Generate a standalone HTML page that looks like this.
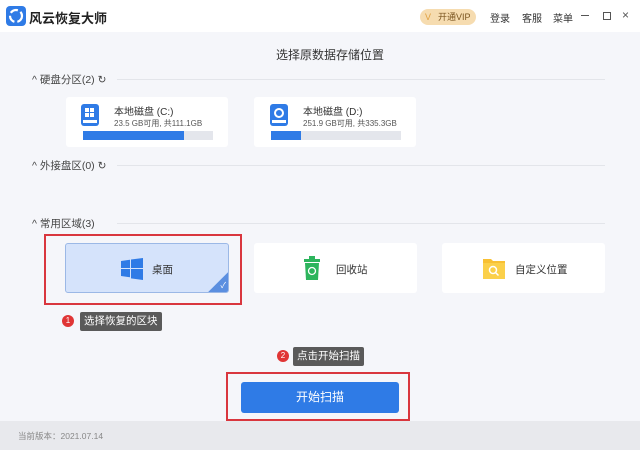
<!DOCTYPE html><html><head><meta charset="utf-8"><style>
*{margin:0;padding:0;box-sizing:border-box}
body{width:640px;height:450px;background:#f5f6fa;font-family:"Liberation Sans","Noto Sans CJK SC",sans-serif;position:relative;overflow:hidden;color:#333}
.a{position:absolute}
.card{position:absolute;background:#fff;border-radius:3px}
.sec{position:absolute;left:32px;font-size:10.5px;color:#444}
.line{position:absolute;height:1px;background:#e3e5ea;left:117px;width:488px}
.tip{position:absolute;background:#5a5a5a;color:#fff;font-size:10.5px;line-height:19px;padding:0 4px;border-radius:2px}
.dot{position:absolute;width:12px;height:12px;border-radius:50%;background:#e03535;color:#fff;font-size:8px;text-align:center;line-height:12px}
</style></head><body>
<div class="a" style="left:0;top:0;width:640px;height:32px;background:#fff"></div>
<svg class="a" style="left:6px;top:6px" width="20" height="20"><rect width="20" height="20" rx="4" fill="#2f7be6"/><circle cx="10" cy="10" r="6" fill="none" stroke="#fff" stroke-width="2.2" stroke-dasharray="8 3"/></svg>
<div class="a" style="left:29px;top:8px;font-size:13px;font-weight:bold;color:#222">风云恢复大师</div>
<div class="a" style="left:420px;top:9px;width:56px;height:16px;border-radius:8px;background:#f6dcb0;font-size:9px;color:#7a5520;line-height:16px;padding-left:18px">开通VIP</div>
<div class="a" style="left:425px;top:12px;font-size:9px;color:#e0a040">V</div>
<div class="a" style="left:490px;top:10px;font-size:10px;color:#333">登录</div>
<div class="a" style="left:522px;top:10px;font-size:10px;color:#333">客服</div>
<div class="a" style="left:553px;top:10px;font-size:10px;color:#333">菜单</div>
<div class="a" style="left:581px;top:15px;width:8px;height:1px;background:#555"></div>
<div class="a" style="left:603px;top:12px;width:8px;height:8px;border:1px solid #555"></div>
<div class="a" style="left:622px;top:8px;font-size:12px;color:#555">×</div>
<div class="a" style="left:0;top:46px;width:640px;text-align:center;font-size:12px;color:#333;padding-left:20px">选择原数据存储位置</div>

<div class="sec" style="top:72px">^ 硬盘分区(2) ↻</div><div class="line" style="top:79px"></div>
<div class="card" style="left:66px;top:97px;width:162px;height:50px"></div>
<svg class="a" style="left:81px;top:104px" width="18" height="22"><rect width="18" height="22" rx="3" fill="#2f7be6"/><rect x="4" y="4" width="4" height="4" fill="#fff"/><rect x="9" y="4" width="4" height="4" fill="#fff"/><rect x="4" y="9" width="4" height="4" fill="#fff"/><rect x="9" y="9" width="4" height="4" fill="#fff"/><rect x="2" y="16" width="14" height="3" fill="#fff"/></svg>
<div class="a" style="left:114px;top:103px;font-size:10px">本地磁盘 (C:)</div>
<div class="a" style="left:114px;top:118px;font-size:8px;color:#555">23.5 GB可用, 共111.1GB</div>
<div class="a" style="left:83px;top:131px;width:130px;height:9px;background:#e4e6ec"><div style="width:101px;height:9px;background:#2f7be6"></div></div>
<div class="card" style="left:254px;top:97px;width:162px;height:50px"></div>
<svg class="a" style="left:270px;top:104px" width="18" height="22"><rect width="18" height="22" rx="3" fill="#2f7be6"/><circle cx="9" cy="9" r="4" fill="none" stroke="#fff" stroke-width="2"/><rect x="2" y="16" width="14" height="3" fill="#fff"/></svg>
<div class="a" style="left:303px;top:103px;font-size:10px">本地磁盘 (D:)</div>
<div class="a" style="left:303px;top:118px;font-size:8px;color:#555">251.9 GB可用, 共335.3GB</div>
<div class="a" style="left:271px;top:131px;width:130px;height:9px;background:#e4e6ec"><div style="width:30px;height:9px;background:#2f7be6"></div></div>

<div class="sec" style="top:158px">^ 外接盘区(0) ↻</div><div class="line" style="top:165px"></div>
<div class="sec" style="top:216px">^ 常用区域(3)</div><div class="line" style="top:223px"></div>

<div class="a" style="left:44px;top:234px;width:198px;height:71px;border:2px solid #d9363e"></div>
<div class="card" style="left:65px;top:243px;width:164px;height:50px;background:#d5e3fb;border:1px solid #9bb8e6;overflow:hidden"><div class="a" style="right:-14px;bottom:-14px;width:28px;height:28px;background:#5b8fe0;transform:rotate(45deg)"></div><div class="a" style="right:2px;bottom:1px;color:#fff;font-size:8px">✓</div></div>
<svg class="a" style="left:121px;top:258px" width="22" height="22"><path d="M0 3l9-1.3v8.3H0zM10 1.5L22 0v10H10zM0 11h9v8.3L0 18zM10 11h12v11l-12-1.6z" fill="#2f7be6"/></svg>
<div class="a" style="left:152px;top:262px;font-size:10.5px">桌面</div>
<div class="card" style="left:254px;top:243px;width:163px;height:50px"></div>
<svg class="a" style="left:304px;top:256px" width="16" height="24"><rect x="5" y="0" width="6" height="3" fill="#2db55d"/><rect x="0" y="3" width="16" height="3" fill="#2db55d"/><path d="M1 7h14l-1 17H2z" fill="#2db55d"/><circle cx="8" cy="15" r="3.5" fill="none" stroke="#fff" stroke-width="1.3"/></svg>
<div class="a" style="left:336px;top:262px;font-size:10.5px">回收站</div>
<div class="card" style="left:442px;top:243px;width:163px;height:50px"></div>
<svg class="a" style="left:483px;top:257px" width="22" height="22"><path d="M0 2h8l2 2h12v18H0z" fill="#f8c033"/><rect x="0" y="6" width="22" height="16" fill="#fbd04a"/><circle cx="10" cy="13" r="3.5" fill="none" stroke="#fff" stroke-width="1.5"/><path d="M12.5 15.5l3 3" stroke="#fff" stroke-width="1.5"/></svg>
<div class="a" style="left:515px;top:262px;font-size:10.5px">自定义位置</div>

<div class="dot" style="left:62px;top:315px">1</div>
<div class="tip" style="left:80px;top:312px">选择恢复的区块</div>
<div class="dot" style="left:277px;top:350px">2</div>
<div class="tip" style="left:293px;top:347px">点击开始扫描</div>

<div class="a" style="left:226px;top:372px;width:184px;height:49px;border:2px solid #d9363e"></div>
<div class="a" style="left:241px;top:382px;width:158px;height:31px;background:#2f7be6;border-radius:3px;color:#fff;font-size:12px;text-align:center;line-height:31px">开始扫描</div>
<div class="a" style="left:0;top:421px;width:640px;height:29px;background:#e8e9ed"></div>
<div class="a" style="left:18px;top:430px;font-size:8.5px;color:#888">当前版本：2021.07.14</div>
</body></html>
